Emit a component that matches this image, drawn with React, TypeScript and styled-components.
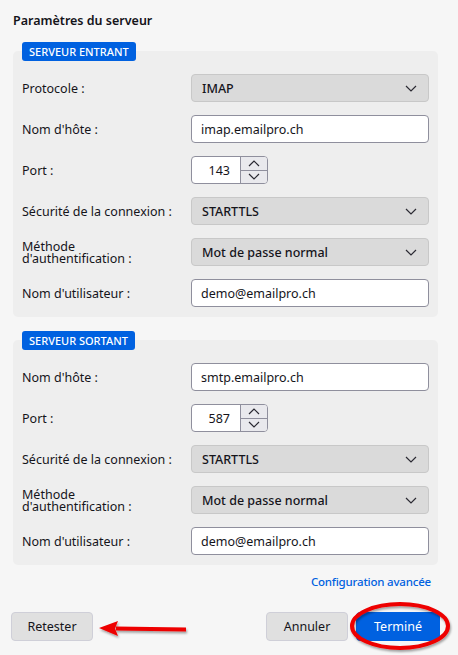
import styled, { createGlobalStyle } from 'styled-components';

const GlobalStyle = createGlobalStyle`
  html, body {
    margin: 0;
    padding: 0;
    background: #f6f6f6;
  }
  body {
    font-family: 'Noto Sans', 'Open Sans', sans-serif;
    color: #15141a;
  }
`;

type Field =
  | { kind: 'select'; label: string; value: string }
  | { kind: 'text'; label: string; value: string }
  | { kind: 'number'; label: string; value: string };

const incoming: Field[] = [
  { kind: 'select', label: 'Protocole :', value: 'IMAP' },
  { kind: 'text', label: "Nom d'hôte :", value: 'imap.emailpro.ch' },
  { kind: 'number', label: 'Port :', value: '143' },
  { kind: 'select', label: 'Sécurité de la connexion :', value: 'STARTTLS' },
  { kind: 'select', label: "Méthode\nd'authentification :", value: 'Mot de passe normal' },
  { kind: 'text', label: "Nom d'utilisateur :", value: 'demo@emailpro.ch' },
];

const outgoing: Field[] = [
  { kind: 'text', label: "Nom d'hôte :", value: 'smtp.emailpro.ch' },
  { kind: 'number', label: 'Port :', value: '587' },
  { kind: 'select', label: 'Sécurité de la connexion :', value: 'STARTTLS' },
  { kind: 'select', label: "Méthode\nd'authentification :", value: 'Mot de passe normal' },
  { kind: 'text', label: "Nom d'utilisateur :", value: 'demo@emailpro.ch' },
];

function Chevron({ up }: { up?: boolean }) {
  return (
    <svg width="12" height="7" viewBox="0 0 12 7">
      <path
        d={up ? 'M1 6 L6 1 L11 6' : 'M1 1 L6 6 L11 1'}
        fill="none"
        stroke="#2b2a33"
        strokeWidth="1.2"
      />
    </svg>
  );
}

function FieldControl({ field }: { field: Field }) {
  if (field.kind === 'select') {
    return (
      <SelectBox>
        <span>{field.value}</span>
        <Chevron />
      </SelectBox>
    );
  }
  if (field.kind === 'number') {
    return (
      <NumberBox>
        <NumberValue>{field.value}</NumberValue>
        <Spinner>
          <SpinButton>
            <Chevron up />
          </SpinButton>
          <SpinButton>
            <Chevron />
          </SpinButton>
        </Spinner>
      </NumberBox>
    );
  }
  return <TextBox>{field.value}</TextBox>;
}

function ServerSection({ title, fields }: { title: string; fields: Field[] }) {
  return (
    <Section>
      <Badge>{title}</Badge>
      <Panel>
        {fields.map((field) => (
          <Row key={field.label}>
            <Label $multiline={field.label.includes('\n')}>{field.label}</Label>
            <FieldControl field={field} />
          </Row>
        ))}
      </Panel>
    </Section>
  );
}

function Arrow() {
  return (
    <ArrowSvg width="96" height="24" viewBox="0 0 96 24">
      <defs>
        <filter id="arrowShadow" x="-10%" y="-50%" width="120%" height="200%">
          <feDropShadow dx="1" dy="2" stdDeviation="1.2" floodColor="#000" floodOpacity="0.35" />
        </filter>
      </defs>
      <g filter="url(#arrowShadow)">
        <path d="M20 9.6 L90 10.6 L90 14.4 L20 13.4 Z" fill="#ee0000" />
        <path d="M3 11 L22 4 L19 11.5 L22 19 Z" fill="#ee0000" />
      </g>
    </ArrowSvg>
  );
}

function Highlight() {
  return (
    <HighlightSvg width="106" height="54" viewBox="0 0 106 54">
      <defs>
        <filter id="ringShadow" x="-10%" y="-20%" width="120%" height="140%">
          <feDropShadow dx="1" dy="2" stdDeviation="1.2" floodColor="#000" floodOpacity="0.35" />
        </filter>
      </defs>
      <ellipse
        cx="52"
        cy="25"
        rx="48"
        ry="22"
        fill="none"
        stroke="#ee0000"
        strokeWidth="4"
        filter="url(#ringShadow)"
      />
    </HighlightSvg>
  );
}

export default function App() {
  return (
    <Page>
      <GlobalStyle />
      <Title>Paramètres du serveur</Title>
      <ServerSection title="SERVEUR ENTRANT" fields={incoming} />
      <ServerSection title="SERVEUR SORTANT" fields={outgoing} />
      <LinkRow>
        <AdvancedLink>Configuration avancée</AdvancedLink>
      </LinkRow>
      <ButtonRow>
        <Button>Retester</Button>
        <Arrow />
        <Spacer />
        <Button>Annuler</Button>
        <PrimaryWrap>
          <PrimaryButton>Terminé</PrimaryButton>
          <Highlight />
        </PrimaryWrap>
      </ButtonRow>
    </Page>
  );
}

const Page = styled.div`
  width: 458px;
  height: 655px;
  box-sizing: border-box;
  padding: 11px 20px 0 13px;
  display: flex;
  flex-direction: column;
  overflow: hidden;
`;

const Title = styled.h1`
  margin: 0;
  font-size: 12.5px;
  line-height: 20px;
  font-weight: 600;
  color: #15141a;
`;

const Section = styled.section`
  display: flex;
  flex-direction: column;
  margin-top: 11px;

  & + & {
    margin-top: 14px;
  }
`;

const Badge = styled.div`
  position: relative;
  z-index: 1;
  align-self: flex-start;
  margin: 0 0 -10px 9px;
  height: 19px;
  padding: 0 7px;
  border-radius: 3px;
  background: #0061e0;
  color: #ffffff;
  font-size: 11px;
  line-height: 19px;
  font-weight: 500;
`;

const Panel = styled.div`
  background: #eeeeee;
  border-radius: 5px;
  padding: 23px 9px 10px 9px;
  display: flex;
  flex-direction: column;
  gap: 13px;
`;

const Row = styled.div`
  display: grid;
  grid-template-columns: 169px 1fr;
  align-items: center;
  min-height: 28px;
`;

const Label = styled.div<{ $multiline: boolean }>`
  white-space: pre-line;
  font-size: 12.5px;
  line-height: ${(p) => (p.$multiline ? '12px' : '16px')};
  padding-top: 1px;
  color: #15141a;
`;

const SelectBox = styled.div`
  height: 28px;
  box-sizing: border-box;
  display: flex;
  align-items: center;
  justify-content: space-between;
  padding: 0 11px 0 10px;
  background: #dadada;
  border: 1px solid #c8c8c8;
  border-radius: 4px;
  font-size: 12.5px;
  font-weight: 500;
  color: #15141a;
`;

const TextBox = styled.div`
  height: 28px;
  box-sizing: border-box;
  display: flex;
  align-items: center;
  padding: 0 9px;
  background: #ffffff;
  border: 1px solid #8f8f9d;
  border-radius: 4px;
  font-size: 12.5px;
  color: #15141a;
`;

const NumberBox = styled.div`
  width: 77px;
  height: 28px;
  box-sizing: border-box;
  display: flex;
  background: #ffffff;
  border: 1px solid #8f8f9d;
  border-radius: 4px;
  overflow: hidden;
`;

const NumberValue = styled.div`
  flex: 1;
  display: flex;
  align-items: center;
  justify-content: flex-end;
  padding-right: 10px;
  font-size: 12.5px;
  color: #15141a;
`;

const Spinner = styled.div`
  width: 26px;
  display: flex;
  flex-direction: column;
  border-left: 1px solid #8f8f9d;
`;

const SpinButton = styled.div`
  flex: 1;
  display: flex;
  align-items: center;
  justify-content: center;
  background: #e9e9ed;

  & + & {
    border-top: 1px solid #8f8f9d;
  }
`;

const LinkRow = styled.div`
  display: flex;
  justify-content: flex-end;
  padding: 9px 7px 0 0;
`;

const AdvancedLink = styled.a`
  font-size: 11.5px;
  line-height: 16px;
  font-weight: 500;
  letter-spacing: -0.2px;
  color: #0061e0;
  cursor: pointer;
`;

const ButtonRow = styled.div`
  display: flex;
  align-items: center;
  margin: 22px -2px 0 -2px;
`;

const Button = styled.button`
  width: 82px;
  height: 29px;
  box-sizing: border-box;
  border: 1px solid #cfcfd8;
  border-radius: 4px;
  background: #e0e0e0;
  font-family: inherit;
  font-size: 12.5px;
  color: #15141a;
  padding: 0;
`;

const ArrowSvg = styled.svg`
  margin: 4px 0 0 3px;
  flex-shrink: 0;
`;

const Spacer = styled.div`
  flex: 1;
`;

const PrimaryWrap = styled.div`
  position: relative;
  margin-left: 8px;
`;

const PrimaryButton = styled(Button)`
  width: 84px;
  border-color: #0061e0;
  background: #0061e0;
  color: #ffffff;
`;

const HighlightSvg = styled.svg`
  position: absolute;
  left: -8px;
  top: -11px;
  pointer-events: none;
`;
